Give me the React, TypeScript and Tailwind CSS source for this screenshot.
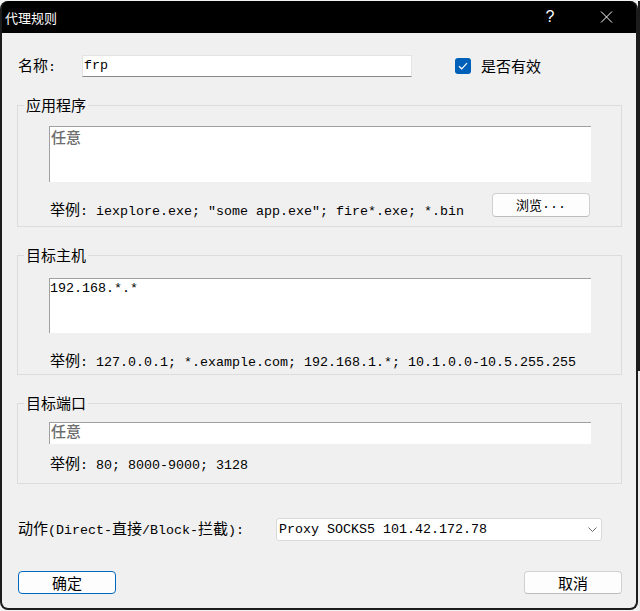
import type { ReactNode } from "react";

const CJK_RUN = /([\u3000-\u303f\u4e00-\u9fff\uff00-\uffef]+)/;

// Latin in a mono face, Chinese in a slightly larger CJK face (like SimSun in the dialog)
function Txt({ s }: { s: string }) {
  return (
    <>
      {s.split(CJK_RUN).map((part, i) =>
        i % 2 === 1 ? (
          <span key={i} className="font-['Noto_Sans_CJK_SC',sans-serif] text-[15px]">
            {part}
          </span>
        ) : (
          <span key={i}>{part}</span>
        )
      )}
    </>
  );
}

function Group({ title, className, children }: { title: string; className: string; children: ReactNode }) {
  return (
    <div className={`flex flex-col border border-[#dcdcdc] ${className}`}>
      <div className="-mt-[11px] ml-[6px] h-[20px] self-start bg-[#f0f0f0] px-[2px] leading-[20px]">
        <Txt s={title} />
      </div>
      {children}
    </div>
  );
}

export default function App() {
  return (
    <div className="flex h-[611px] w-[640px] bg-[#f2f2f2] pt-[1px]">
      {/* Dialog window */}
      <div className="flex h-[609px] w-[638px] flex-col rounded-[8px] border-2 border-t-0 border-[#1c1c1c] bg-black">
        {/* Title bar */}
        <div className="flex h-[32px] shrink-0 items-center rounded-t-[8px] bg-black text-white">
          <span className="pl-[3px] pt-[2px] font-['Noto_Sans_CJK_SC',sans-serif] text-[13px]">代理规则</span>
          <span className="ml-auto w-[20px] text-center font-['Liberation_Sans',sans-serif] text-[16px]">?</span>
          <svg className="ml-[37px] mr-[19px]" width="20" height="12" viewBox="0 0 20 12" aria-hidden="true">
            <path d="M4 0.5 L15 11.5 M15 0.5 L4 11.5" stroke="white" strokeWidth="1" fill="none" />
          </svg>
        </div>

        {/* Body */}
        <div className="flex flex-1 flex-col rounded-b-[6px] bg-[#f0f0f0] pl-[15px] pr-[14px] font-['Liberation_Mono','Noto_Sans_CJK_SC',monospace] text-[13.33px] leading-[20px] text-black">
          {/* Name row */}
          <div className="mt-[22px] flex h-[22px] shrink-0 items-center">
            <div className="w-[65px] pl-[1px]">
              <Txt s="名称:" />
            </div>
            <div className="flex h-[22px] w-[330px] items-center border border-[#e3e3e3] border-b-[#8a8a8a] bg-white pl-[1px]">
              frp
            </div>
            <label className="ml-[43px] flex items-center gap-[5px]">
              <span className="flex h-[16px] w-[16px] items-center justify-center rounded-[3px] bg-[#005fb8]">
                <svg width="10" height="8" viewBox="0 0 10 8" aria-hidden="true">
                  <path d="M1 4.2 L3.7 6.8 L9 1.2" stroke="white" strokeWidth="1.2" fill="none" />
                </svg>
              </span>
              <Txt s="是否有效" />
            </label>
          </div>

          {/* 应用程序 */}
          <Group title="应用程序" className="mt-[28px] h-[122px] shrink-0">
            <div className="ml-[31px] mr-[30px] mt-[11px] h-[56px] border-l border-t border-[#a0a0a0] bg-white pl-[1px] font-medium text-[#6d6d6d]">
              <Txt s="任意" />
            </div>
            <div className="ml-[32px] mr-[31px] mt-[11px] flex h-[26px] items-start">
              <div className="h-[26px] whitespace-pre pt-[6px]">
                <Txt s={'举例: iexplore.exe; "some app.exe"; fire*.exe; *.bin'} />
              </div>
              <button className="ml-auto flex h-[24px] w-[98px] items-center justify-center rounded-[4px] border border-[#d0d0d0] border-b-[#bdbdbd] bg-[#fdfdfd]">
                <span className="font-['Noto_Sans_CJK_SC',sans-serif] text-[13px]">浏览</span>
                <span>...</span>
              </button>
            </div>
          </Group>

          {/* 目标主机 */}
          <Group title="目标主机" className="mt-[28px] h-[120px] shrink-0">
            <div className="ml-[31px] mr-[30px] mt-[13px] h-[55px] border-l border-t border-[#a0a0a0] bg-white">
              192.168.*.*
            </div>
            <div className="ml-[32px] mt-[17px] h-[20px] whitespace-pre">
              <Txt s="举例: 127.0.0.1; *.example.com; 192.168.1.*; 10.1.0.0-10.5.255.255" />
            </div>
          </Group>

          {/* 目标端口 */}
          <Group title="目标端口" className="mt-[28px] h-[81px] shrink-0">
            <div className="ml-[31px] mr-[30px] mt-[9px] h-[22px] border-l border-t border-[#a0a0a0] bg-white pl-[1px] font-medium leading-[16px] text-[#6d6d6d]">
              <Txt s="任意" />
            </div>
            <div className="ml-[32px] mt-[9px] h-[20px] whitespace-pre">
              <Txt s="举例: 80; 8000-9000; 3128" />
            </div>
          </Group>

          {/* Action row */}
          <div className="mt-[34px] flex h-[23px] shrink-0 items-center">
            <div className="w-[259px] pl-[1px]">
              <Txt s="动作(Direct-直接/Block-拦截):" />
            </div>
            <div className="flex h-[23px] w-[326px] items-center rounded-[3px] border border-[#d9d9d9] bg-white pl-[2px]">
              <span className="whitespace-pre">Proxy SOCKS5 101.42.172.78</span>
              <svg className="ml-auto mr-[4px]" width="9" height="5" viewBox="0 0 9 5" aria-hidden="true">
                <path d="M0.5 0.5 L4.5 4.5 L8.5 0.5" stroke="#6b6b6b" strokeWidth="1" fill="none" />
              </svg>
            </div>
          </div>

          {/* Buttons */}
          <div className="mt-[30px] flex h-[23px] shrink-0">
            <button className="ml-[1px] flex h-[23px] w-[98px] items-center justify-center rounded-[4px] border border-[#0067c0] bg-[#fdfdfd]">
              <Txt s="确定" />
            </button>
            <button className="ml-auto flex h-[23px] w-[98px] items-center justify-center rounded-[4px] border border-[#d0d0d0] border-b-[#bdbdbd] bg-[#fdfdfd]">
              <Txt s="取消" />
            </button>
          </div>
        </div>
      </div>

      {/* Desktop strip behind the window */}
      <div className="flex w-[2px] flex-col">
        <div className="h-[370px] bg-[#1b1b1b]" />
        <div className="flex-1 bg-[#ececec]" />
      </div>
    </div>
  );
}
